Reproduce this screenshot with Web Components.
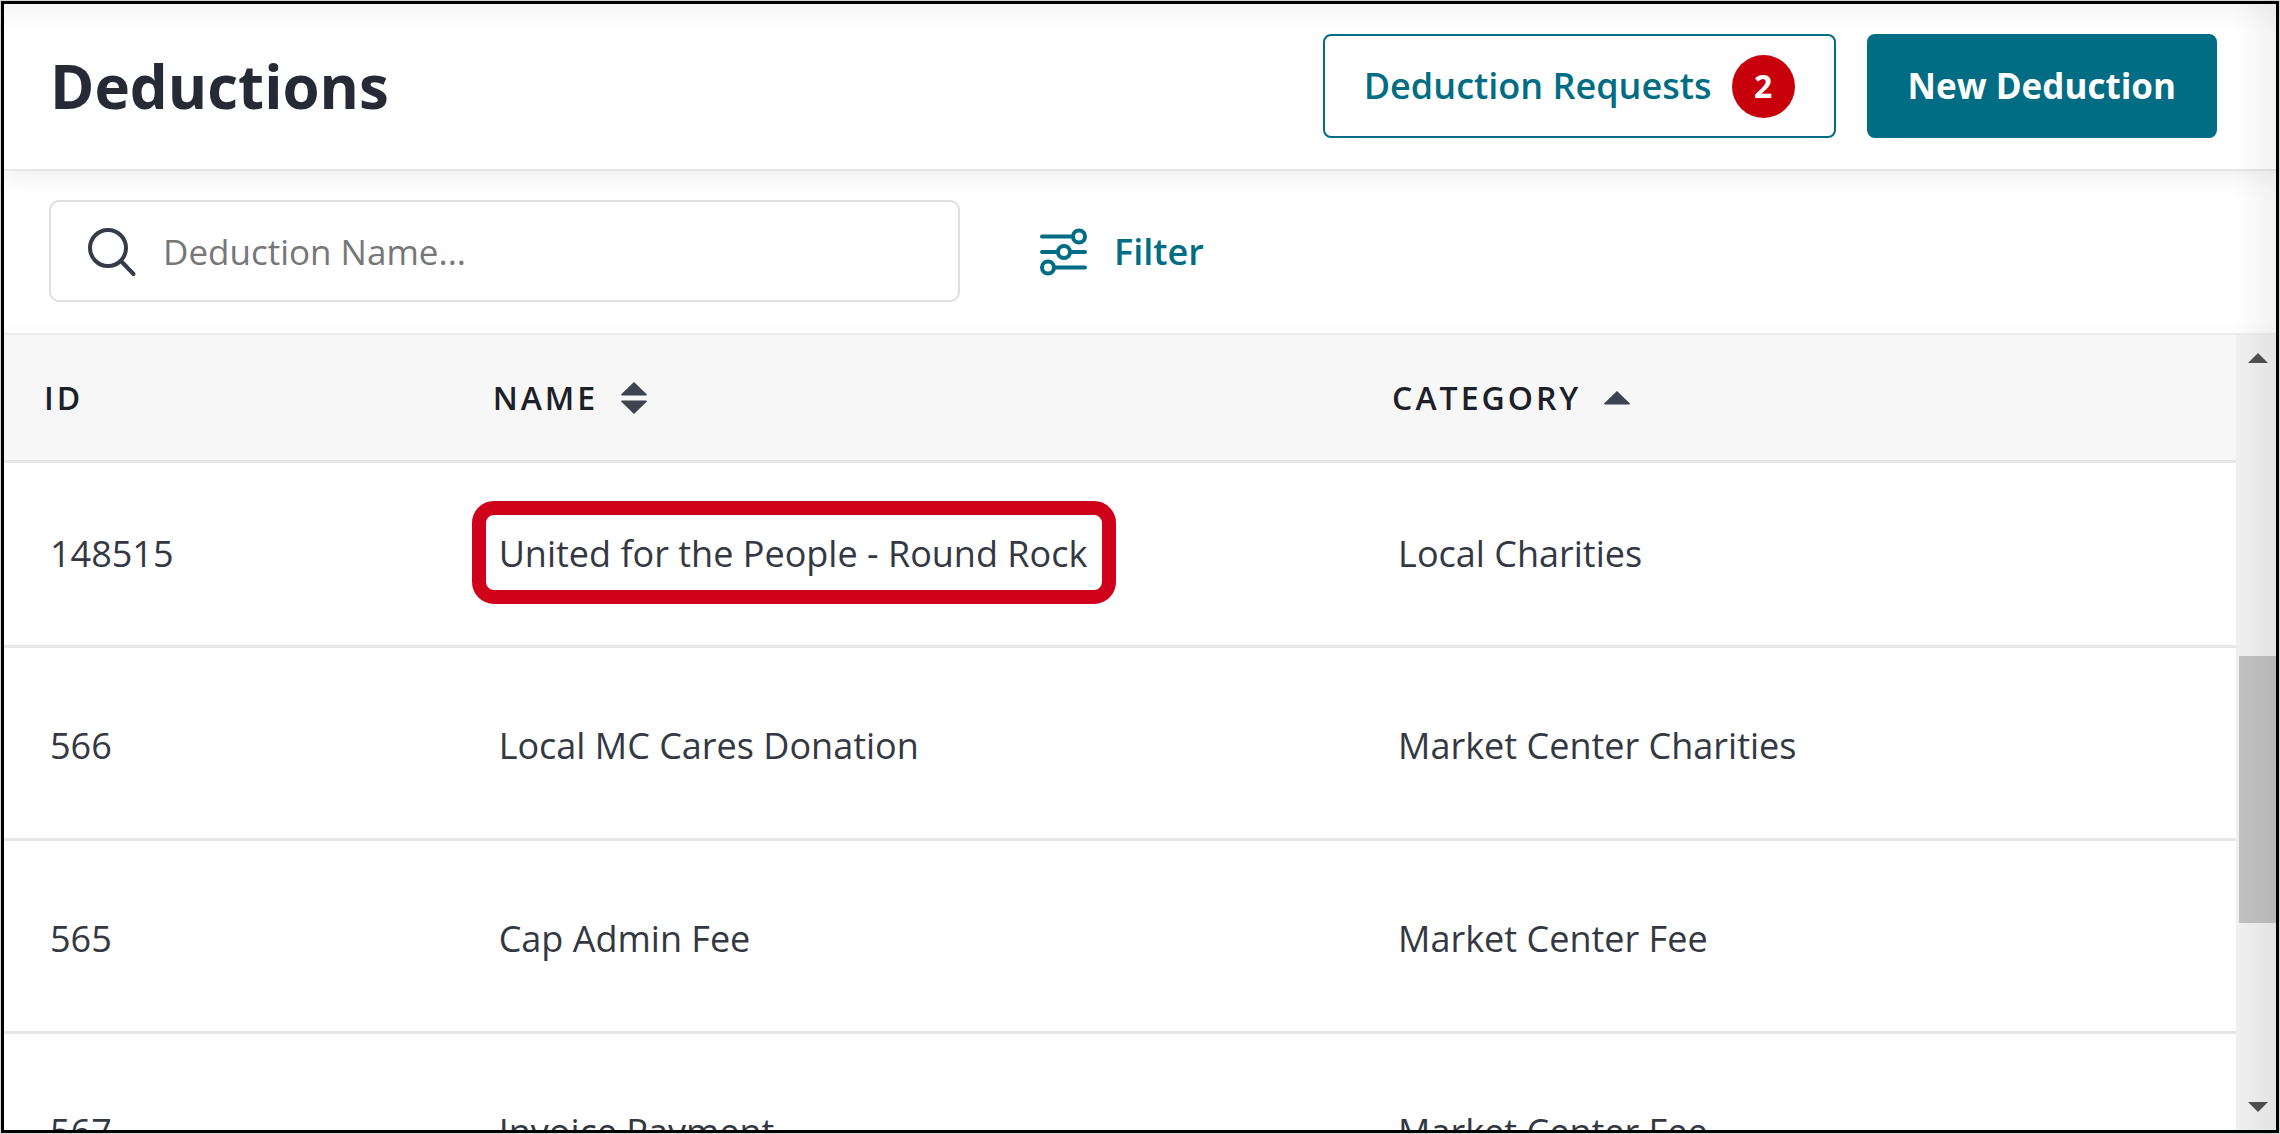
<!DOCTYPE html>
<html lang="en">
<head>
<meta charset="utf-8">
<title>Deductions</title>
<style>
  html, body { height: 100%; margin: 0; }
  body {
    background: #d4dad6;
    font-family: "Open Sans", "Noto Sans", sans-serif;
    overflow: hidden;
    --teal: #006d85;
    --ink: #252a34;
    --slate: #3d434f;
    --line: #e6e6e6;
  }
</style>
</head>
<body>
<deductions-app></deductions-app>

<script>
const define = (name, html, setup) => {
  const template = document.createElement('template');
  template.innerHTML = html;
  customElements.define(name, class extends HTMLElement {
    constructor() {
      super();
      this.attachShadow({ mode: 'open' }).append(template.content.cloneNode(true));
    }
    connectedCallback() { if (setup) setup(this, this.shadowRoot); }
  });
};

define('app-button', `
  <style>
    :host { display: block; }
    button {
      display: flex; align-items: center; gap: 20px; box-sizing: border-box;
      height: 104px; padding: 0 39px; margin: 0;
      border: 2px solid var(--teal); border-radius: 8px;
      background: #fff; color: var(--teal);
      font: 600 36px/48px "Open Sans", sans-serif; white-space: nowrap;
    }
    :host([primary]) button { background: var(--teal); color: #fff; font-weight: 700; font-size: 35px; }
  </style>
  <button type="button"><slot></slot></button>`);

define('count-badge', `
  <style>
    :host {
      display: flex; align-items: center; justify-content: center;
      width: 63px; height: 63px; border-radius: 50%;
      background: #c7000b; color: #fff; font: 700 32px/48px "Open Sans", sans-serif;
    }
  </style>
  <slot></slot>`);

define('page-header', `
  <style>
    :host {
      display: flex; align-items: center; justify-content: space-between;
      padding: 30px 59px 31px 46px; background: #fff;
      border-bottom: 2px solid var(--line);
      box-shadow: 0 4px 24px rgba(0,0,0,.08); position: relative;
    }
    h1 { margin: 0; font-size: 60px; line-height: 80px; font-weight: 700; color: var(--ink); }
    .actions { display: flex; gap: 31px; }
  </style>
  <h1><slot></slot></h1>
  <div class="actions"><slot name="actions"></slot></div>`);

define('search-box', `
  <style>
    :host { display: block; flex: 0 1 911px; }
    label {
      display: flex; align-items: center; gap: 24px; box-sizing: border-box;
      height: 102px; padding: 0 36px;
      border: 2px solid #dedede; border-radius: 10px; background: #fff;
    }
    svg { flex: none; width: 52px; height: 52px; }
    input {
      flex: 1; min-width: 0; border: 0; padding: 2px 0 0; outline: 0; background: none;
      font: 400 35px/48px "Open Sans", sans-serif; color: var(--ink);
    }
    input::placeholder { color: #777; opacity: 1; }
  </style>
  <label>
    <svg viewBox="0 0 52 52" fill="none" stroke="#353b48" stroke-width="4" stroke-linecap="round" aria-hidden="true">
      <circle cx="21" cy="23" r="18"/><path d="M34 36 46.500 49"/>
    </svg>
    <input type="search" placeholder="Deduction Name..." aria-label="Deduction name">
  </label>`);

define('filter-button', `
  <style>
    :host { display: block; }
    button {
      display: flex; align-items: center; gap: 26px; padding: 2px 0 0; border: 0; background: none;
      color: var(--teal); font: 600 36px/48px "Open Sans", sans-serif;
    }
    svg { width: 48px; height: 48px; }
  </style>
  <button type="button">
    <svg viewBox="0 0 48 48" fill="none" stroke="currentColor" stroke-width="4" stroke-linecap="round" aria-hidden="true">
      <path d="M2 8.500H32M2 24H17M31 24H45M16 39.500H45"/>
      <circle cx="39" cy="8.500" r="6"/><circle cx="24" cy="24" r="6"/><circle cx="8" cy="39.500" r="6"/>
    </svg>
    <slot></slot>
  </button>`);

define('sort-icon', `
  <style>
    :host { display: block; }
    svg { display: block; width: 28px; height: 34px; fill: var(--slate); }
    :host([direction="up"]) .down { display: none; }
  </style>
  <svg viewBox="0 0 26 34" preserveAspectRatio="none" aria-hidden="true">
    <path class="up" d="M13 1 25 13.500Q25 14.500 24 14.500H2Q1 14.500 1 13.500Z"/>
    <path class="down" d="M13 33 25 20.500Q25 19.500 24 19.500H2Q1 19.500 1 20.500Z"/>
  </svg>`, (host, root) => {
  if (host.getAttribute('direction') === 'up')
    root.querySelector('svg').setAttribute('viewBox', '0 -9 26 34');
});

define('scroll-rail', `
  <style>
    :host {
      display: flex; flex-direction: column; flex: 0 0 40px; box-sizing: border-box;
      padding: 18px 0 18px 3px; background: #f0f0f0;
    }
    svg { width: 20px; height: 10px; margin-left: 9px; fill: #505050; flex: none; }
    .track { flex: 1; display: flex; flex-direction: column; }
    .before { flex: 293; } .thumb { flex: 267; background: #c1c1c1; } .after { flex: 179; }
  </style>
  <svg viewBox="0 0 20 10"><path d="M10 0 20 10H0Z"/></svg>
  <div class="track"><div class="before"></div><div class="thumb"></div><div class="after"></div></div>
  <svg viewBox="0 0 20 10"><path d="M0 0H20L10 10Z"/></svg>`);

const rows = [
  ['148515', 'United for the People - Round Rock', 'Local Charities', true],
  ['566', 'Local MC Cares Donation', 'Market Center Charities'],
  ['565', 'Cap Admin Fee', 'Market Center Fee'],
  ['567', 'Invoice Payment', 'Market Center Fee']
];

define('deductions-table', `
  <style>
    :host { display: block; flex: 1; min-width: 0; overflow: hidden; background: #fff; }
    table { width: 100%; border-collapse: separate; border-spacing: 0; table-layout: fixed; }
    .id { width: 20.100%; } .name { width: 40.300%; }
    th {
      box-sizing: border-box; height: 128px; padding: 0 0 0 40px; text-align: left;
      background: #f7f7f7; border-bottom: 3px solid var(--line);
      font-size: 32px; line-height: 48px; font-weight: 600; letter-spacing: 3px; color: #1c2027;
    }
    th div { display: flex; align-items: center; gap: 22px; }
    td {
      box-sizing: border-box; height: 193px; padding: 6px 0 0 46px;
      border-bottom: 3px solid var(--line);
      font-size: 36px; line-height: 48px; color: #333842;
    }
    tr:first-child td { height: 185px; padding-top: 0; }
    .highlight { position: relative; }
    .highlight::before {
      content: ""; position: absolute; inset: -28px -29px -26px -27px;
      border: 14px solid #d0021b; border-radius: 22px;
    }
  </style>
  <table>
    <colgroup><col class="id"><col class="name"><col></colgroup>
    <thead><tr>
      <th>ID</th>
      <th><div>NAME <sort-icon></sort-icon></div></th>
      <th><div>CATEGORY <sort-icon direction="up"></sort-icon></div></th>
    </tr></thead>
    <tbody></tbody>
  </table>`, (host, root) => {
  const body = root.querySelector('tbody');
  for (const [id, name, category, marked] of rows) {
    const tr = body.insertRow();
    tr.insertCell().textContent = id;
    const label = document.createElement('span');
    label.textContent = name;
    if (marked) label.className = 'highlight';
    tr.insertCell().append(label);
    tr.insertCell().textContent = category;
  }
});

define('deductions-app', `
  <style>
    :host { display: block; box-sizing: border-box; height: 100vh; padding: 1px; }
    .frame {
      display: flex; flex-direction: column; box-sizing: border-box; height: 100%;
      border: 3px solid #000; background: #fff; overflow: hidden; position: relative;
    }
    .frame::after {
      content: ""; position: absolute; inset: 0; pointer-events: none;
      background:
        linear-gradient(to left, rgba(40,20,30,.06), transparent 40px),
        linear-gradient(rgba(0,0,0,.035), transparent 28px);
    }
    .tools {
      display: flex; align-items: center; gap: 80px; padding: 29px 45px 31px;
      background: linear-gradient(to top, rgba(0,0,0,.01), transparent 12px);
    }
    .list { display: flex; flex: 1; min-height: 0; border-top: 2px solid #ededed; }
  </style>
  <div class="frame">
    <page-header>
      Deductions
      <app-button slot="actions">Deduction Requests <count-badge>2</count-badge></app-button>
      <app-button slot="actions" primary>New Deduction</app-button>
    </page-header>
    <div class="tools">
      <search-box></search-box>
      <filter-button>Filter</filter-button>
    </div>
    <div class="list">
      <deductions-table></deductions-table>
      <scroll-rail></scroll-rail>
    </div>
  </div>`);
</script>
</body>
</html>
